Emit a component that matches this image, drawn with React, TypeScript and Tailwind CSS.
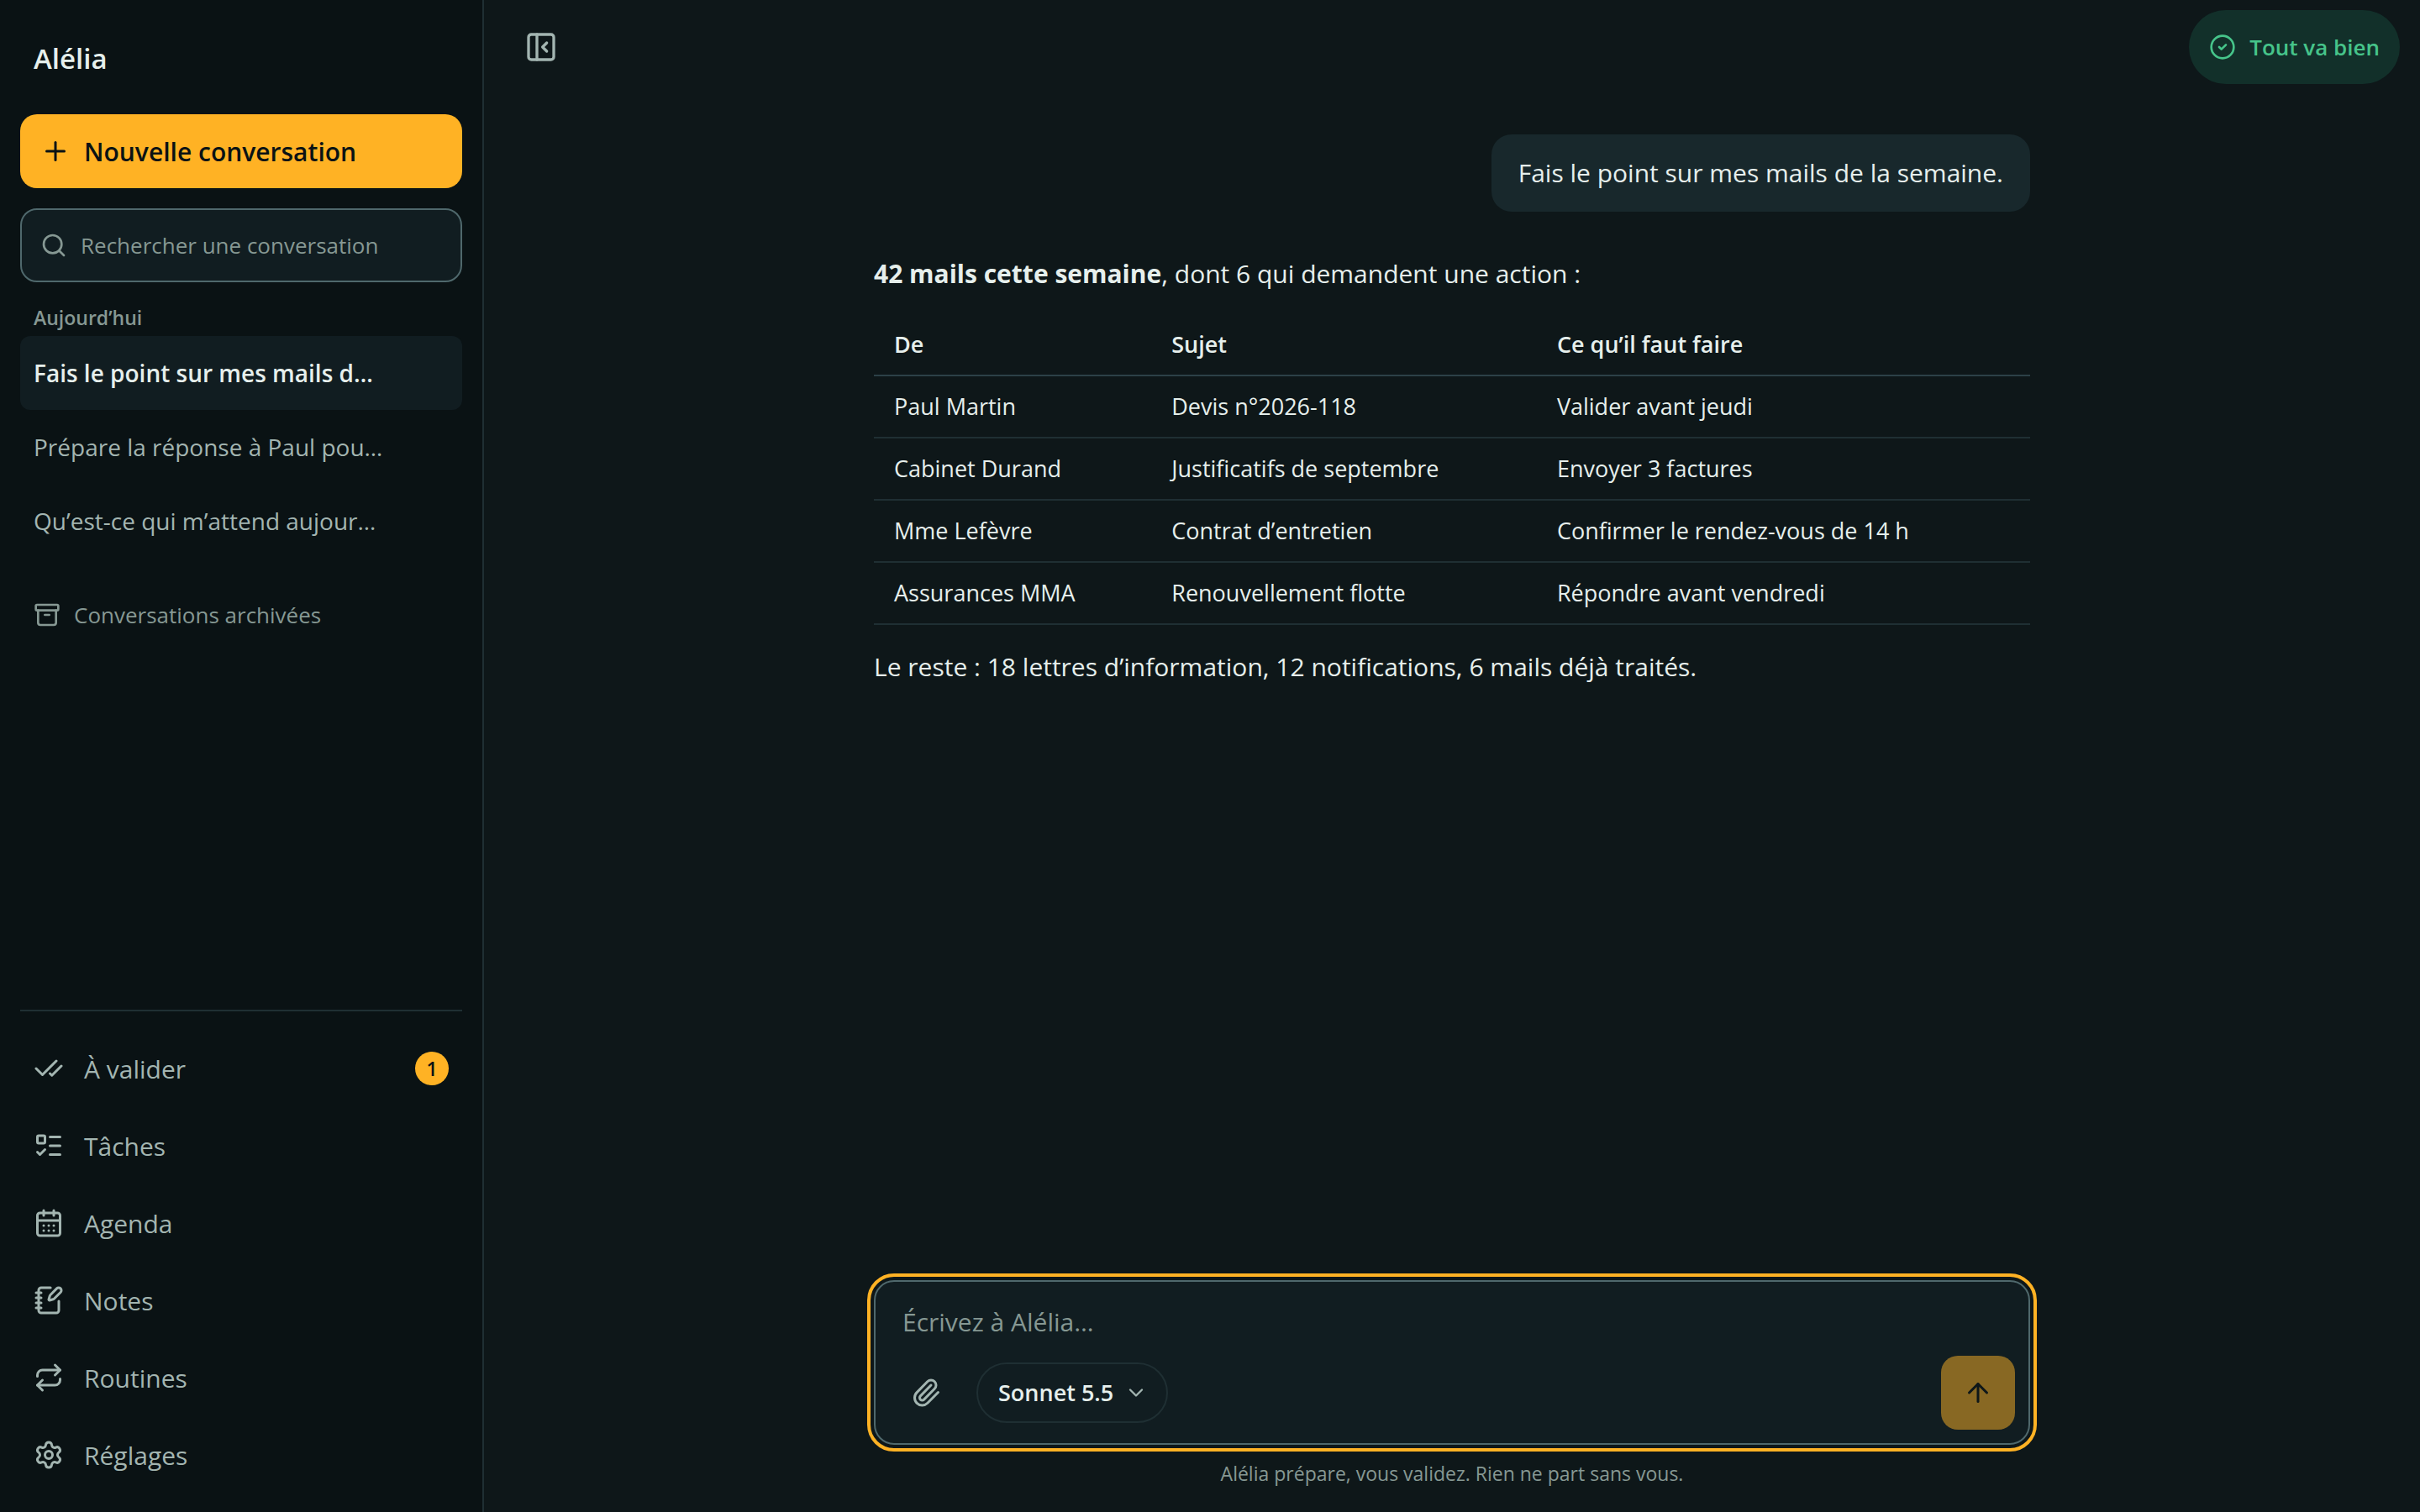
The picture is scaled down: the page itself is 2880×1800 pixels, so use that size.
import { clsx } from 'clsx';
import {
  Archive,
  ArrowUp,
  CalendarDays,
  CheckCheck,
  ChevronDown,
  CircleCheck,
  ListTodo,
  NotebookPen,
  PanelLeftClose,
  Paperclip,
  Plus,
  Repeat,
  Search,
  Settings,
} from 'lucide-react';
import { useState } from 'react';

const conversations = [
  'Fais le point sur mes mails d…',
  'Prépare la réponse à Paul pou…',
  'Qu’est-ce qui m’attend aujour…',
];

const navItems = [
  { label: 'À valider', icon: CheckCheck, count: 1 },
  { label: 'Tâches', icon: ListTodo },
  { label: 'Agenda', icon: CalendarDays },
  { label: 'Notes', icon: NotebookPen },
  { label: 'Routines', icon: Repeat },
  { label: 'Réglages', icon: Settings },
];

const mails = [
  ['Paul Martin', 'Devis n°2026-118', 'Valider avant jeudi'],
  ['Cabinet Durand', 'Justificatifs de septembre', 'Envoyer 3 factures'],
  ['Mme Lefèvre', 'Contrat d’entretien', 'Confirmer le rendez-vous de 14 h'],
  ['Assurances MMA', 'Renouvellement flotte', 'Répondre avant vendredi'],
];

const Sidebar = () => {
  const [active, setActive] = useState(0);
  return (
    <aside className="flex w-[576px] shrink-0 flex-col border-r-2 border-[#1f2f33] bg-[#0a1214] px-6 pb-6">
      <h1 className="px-4 pt-11 text-[33px] leading-[52px] font-semibold">
        Alélia
      </h1>
      <button
        type="button"
        className="mt-10 flex h-22 items-center gap-4 rounded-[20px] bg-[#ffb224] px-6 text-[30px] font-semibold text-[#0a1214]"
      >
        <Plus size={36} />
        Nouvelle conversation
      </button>
      <label className="mt-6 flex h-22 items-center gap-4 rounded-[20px] border-2 border-[#4f686c] bg-[#111d21] px-[22px] text-[#869893]">
        <Search size={32} className="shrink-0" />
        <input
          type="search"
          aria-label="Rechercher une conversation"
          placeholder="Rechercher une conversation"
          className="w-full min-w-0 bg-transparent text-[26px] text-[#e6efec] outline-none placeholder:text-[#869893]"
        />
      </label>
      <h2 className="mt-6 px-4 text-[23px] leading-[36px] font-semibold text-[#869893]">
        Aujourd’hui
      </h2>
      <ul className="mt-1">
        {conversations.map((title, i) => (
          <li key={title}>
            <button
              type="button"
              onClick={() => setActive(i)}
              className={clsx(
                'h-22 w-full rounded-xl px-4 text-left text-[28px]',
                i === active
                  ? 'bg-[#111d21] font-semibold text-[#e6efec]'
                  : 'text-[#a3b5b1]'
              )}
            >
              {title}
            </button>
          </li>
        ))}
      </ul>
      <button
        type="button"
        className="mt-6 flex h-22 items-center gap-4 px-4 text-[26px] text-[#869893]"
      >
        <Archive size={32} />
        Conversations archivées
      </button>
      <nav className="mt-auto flex flex-col gap-1 border-t-2 border-[#1f2f33] pt-6">
        {navItems.map(({ label, icon: Icon, count }) => (
          <a
            key={label}
            href="#"
            className="flex h-22 items-center gap-6 px-4 text-[30px] text-[#a3b5b1]"
          >
            <Icon size={36} />
            {label}
            {count && (
              <span className="ml-auto flex size-10 items-center justify-center rounded-full bg-[#ffb224] text-[23px] font-semibold text-[#0a1214]">
                {count}
              </span>
            )}
          </a>
        ))}
      </nav>
    </aside>
  );
};

const Answer = () => (
  <article className="mt-12 text-[30px] leading-[52px]">
    <p>
      <strong className="font-bold">42 mails cette semaine</strong>, dont 6 qui
      demandent une action :
    </p>
    <table className="mt-[22px] mb-6 w-full table-fixed text-left text-[27px] leading-[40px] [&_td]:px-6 [&_td]:py-4 [&_th]:px-6 [&_th]:py-4">
      <thead>
        <tr className="border-b-2 border-[#2c4147]">
          <th className="w-[24%] font-semibold">De</th>
          <th className="w-1/3 font-semibold">Sujet</th>
          <th className="font-semibold">Ce qu’il faut faire</th>
        </tr>
      </thead>
      <tbody>
        {mails.map((row) => (
          <tr key={row[0]} className="border-b-2 border-[#1f2f33]">
            {row.map((cell) => (
              <td key={cell}>{cell}</td>
            ))}
          </tr>
        ))}
      </tbody>
    </table>
    <p>
      Le reste : 18 lettres d’information, 12 notifications, 6 mails déjà
      traités.
    </p>
  </article>
);

const Composer = () => (
  <form
    className="rounded-3xl border-2 border-[#4f686c] bg-[#111d21] p-4 outline-4 outline-offset-4 outline-[#ffb224]"
    onSubmit={(e) => e.preventDefault()}
  >
    <textarea
      rows={1}
      aria-label="Message"
      placeholder="Écrivez à Alélia…"
      className="block h-18 w-full resize-none bg-transparent px-4 py-1.5 text-[30px] leading-[52px] outline-none placeholder:text-[#869893]"
    />
    <div className="flex items-center gap-4">
      <button
        type="button"
        aria-label="Joindre un fichier"
        className="flex size-22 items-center justify-center text-[#a3b5b1]"
      >
        <Paperclip size={36} />
      </button>
      <div className="relative">
        <select
          aria-label="Modèle"
          className="h-18 appearance-none rounded-full border-2 border-[#1f2f33] bg-transparent pr-[62px] pl-6 text-[27px] font-semibold outline-none"
        >
          <option>Sonnet 5.5</option>
        </select>
        <ChevronDown
          size={28}
          className="pointer-events-none absolute top-[22px] right-6 text-[#a3b5b1]"
        />
      </div>
      <button
        type="submit"
        aria-label="Envoyer"
        className="ml-auto flex size-22 items-center justify-center rounded-[20px] bg-[#886823] text-[#0e1719]"
      >
        <ArrowUp size={36} />
      </button>
    </div>
  </form>
);

const App = () => {
  return (
    <div className="flex min-h-screen bg-[#0e1719] font-['Open_Sans','Noto_Sans',sans-serif] text-[#e6efec]">
      <Sidebar />
      <div className="flex min-w-0 flex-1 flex-col">
        <header className="flex h-28 items-center justify-between px-6">
          <button
            type="button"
            aria-label="Masquer la barre latérale"
            className="flex size-22 items-center justify-center text-[#a3b5b1]"
          >
            <PanelLeftClose size={40} />
          </button>
          <button
            type="button"
            className="flex h-22 items-center gap-4 rounded-full bg-[#12302a] px-6 text-[26px] font-semibold text-[#46c48a]"
          >
            <CircleCheck size={32} />
            Tout va bien
          </button>
        </header>
        <main className="mx-auto flex w-full max-w-[1376px] flex-1 flex-col pt-12">
          <p className="self-end rounded-3xl bg-[#18282c] px-8 py-5 text-[30px] leading-[52px]">
            Fais le point sur mes mails de la semaine.
          </p>
          <Answer />
          <div className="mt-auto pb-7">
            <Composer />
            <p className="mt-4 text-center text-[23px] leading-[36px] text-[#869893]">
              Alélia prépare, vous validez. Rien ne part sans vous.
            </p>
          </div>
        </main>
      </div>
    </div>
  );
};

export default App;
